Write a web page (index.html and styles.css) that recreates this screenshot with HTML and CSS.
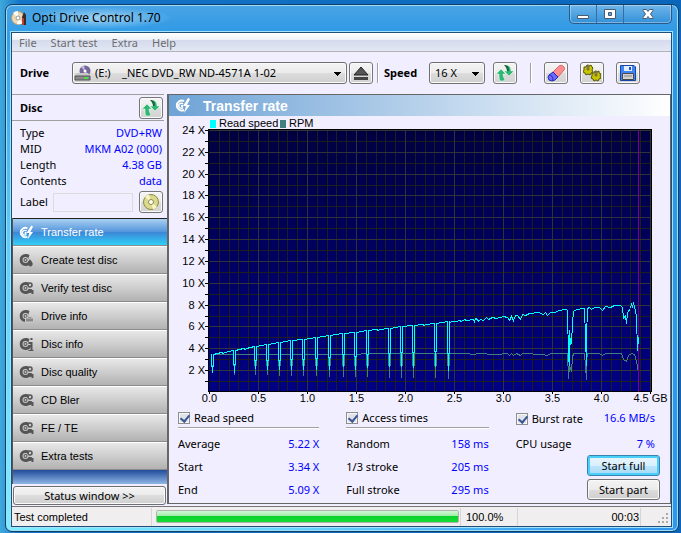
FILE: index.html
```html
<!doctype html>
<html lang="en">
    <head>
        <meta charset="utf-8"/>
        <title>Opti Drive Control 1.70</title>
        <link rel="stylesheet" href="styles.css">
    </head>
    <body>
        <svg class="defs" width="0" height="0" aria-hidden="true">
            <symbol id="refresh" viewBox="0 0 18 18">
                <path d="M5 5l5 5H7c0 2 1 4 2 6l-2 1H4c-1-2-1-4-1-7H0z" fill="#2eb872" stroke="#fff" stroke-width=".5"/>
                <path d="M9 1c4 0 6 2 6 6h3l-5 5-5-5h3c0-2-1-4-2-6z" fill="#2eb872" stroke="#fff" stroke-width=".5"/>
                <path d="M8 1c4 0 5 2 5 6h-2c0-2-1-4-3-6z" fill="#17653f"/>
            </symbol>
            <symbol id="disc" viewBox="0 0 14 14">
                <path fill="currentColor" fill-rule="evenodd" d="M6 1a6 6 0 1 0 0 12 6 6 0 0 0 6-5L9 8V5l1-3a6 6 0 0 0-4-1zM6 4a3 3 0 1 0 0 6 3 3 0 0 0 0-6z"/>
                <circle cx="6" cy="7" r="2" fill="currentColor"/>
                <circle cx="6" cy="7" r="1" fill="#ccc"/>
            </symbol>
            <symbol id="disc-bolt" viewBox="0 0 16 15">
                <path fill="none" stroke="#fff" stroke-width="2" d="M9 3a5 5 0 1 0 0 9"/>
                <path fill="none" stroke="#fff" stroke-width="1.500" d="M8 6a2.500 2.500 0 1 0 0 3.500"/>
                <path fill="#fff" d="M13 0L8 8h3l-2 7 6-8h-3l3-6zM6 7h2v2H6z"/>
            </symbol>
            <symbol id="disc-gears" viewBox="0 0 14 14">
                <use href="#disc"/>
                <circle cx="10.500" cy="4" r="2" fill="#ccc" stroke="#555" stroke-width="1.500"/>
                <circle cx="11" cy="10" r="2" fill="currentColor"/>
                <path d="M12 9h2v4h-2z" fill="currentColor"/>
            </symbol>
        </svg>

        <div class="window">
            <header class="titlebar">
                <svg class="app-icon" width="16" height="16" viewBox="0 0 16 16">
                    <circle cx="7" cy="8" r="6.500" fill="#ead9b4" stroke="#b59a6c"/>
                    <path d="M7 8L2 3a7 7 0 0 1 5-2zM7 8l5 5a7 7 0 0 1-6 1z" fill="#fff"/>
                    <circle cx="7" cy="8" r="2" fill="#fff" stroke="#999"/>
                    <path d="M11 7l2-5 2 3v10h-4z" fill="#3b2a28"/>
                    <path d="M11 8h2v7h-2z" fill="#b5432e"/>
                </svg>
                <h1>Opti Drive Control 1.70</h1>
                <div class="caption">
                    <button type="button" aria-label="Minimize">
                        <svg width="14" height="12" viewBox="0 0 14 12"><path d="M1.500 7.500h11v3h-11z" fill="#fff" stroke="#4b5a70"/></svg>
                    </button>
                    <button type="button" aria-label="Maximize">
                        <svg width="14" height="12" viewBox="0 0 14 12"><path fill-rule="evenodd" d="M1.500 1.500h11v9h-11zM5.500 4.500v3h3v-3z" fill="#fff" stroke="#4b5a70"/></svg>
                    </button>
                    <button type="button" class="close" aria-label="Close">
                        <svg width="14" height="12" viewBox="0 0 14 12"><path d="M2 1.500h3.500L7 3.500l1.500-2H12v1L9.500 6l2.500 3.500v1H8.500L7 8.500l-1.500 2H2v-1L4.500 6 2 2.500z" fill="#fff" stroke="#4b5a70"/></svg>
                    </button>
                </div>
            </header>

            <div class="client">
                <nav class="menu">
                    <a href="#">File</a>
                    <a href="#">Start test</a>
                    <a href="#">Extra</a>
                    <a href="#">Help</a>
                </nav>

                <div class="toolbar">
                    <label class="drive-label" for="drive">Drive</label>
                    <div class="drive-box">
                        <select id="drive"><option>(E:) &nbsp; &nbsp;_NEC DVD_RW ND-4571A 1-02</option></select>
                        <svg width="17" height="17" viewBox="0 0 17 17">
                            <circle cx="11" cy="6" r="5.500" fill="#75669c"/>
                            <path d="M11 6L7 2l3-1.500zM11 6l4 4-3 1z" fill="#c8bde0"/>
                            <circle cx="11" cy="6" r="1.500" fill="#fff"/>
                            <path d="M3 8h11l2 3H1z" fill="#c9c9c9"/>
                            <path d="M1 11h15v4H1z" fill="#8a8a8a" stroke="#555"/>
                            <path d="M10 12h4v2h-4z" fill="#4be04b"/>
                        </svg>
                    </div>
                    <button type="button" class="tool eject" aria-label="Eject">
                        <svg width="16" height="15" viewBox="0 0 16 15"><path d="M8 1l7 8H1z" fill="#555" stroke="#222"/><path d="M1 11h14v3H1z" fill="#444"/></svg>
                    </button>
                    <span class="divider"></span>
                    <label class="speed-label" for="speed">Speed</label>
                    <select id="speed"><option>16 X</option></select>
                    <button type="button" class="tool refresh" aria-label="Refresh speed"><svg width="18" height="18"><use href="#refresh"/></svg></button>
                    <span class="divider wide"></span>
                    <div class="tools">
                        <button type="button" class="tool" aria-label="Erase">
                            <svg width="18" height="18" viewBox="0 0 18 18">
                                <path d="M6 8l6-6q3-2 5 1 1 2 0 3l-6 7z" fill="#ff8f8f" stroke="#d86565"/>
                                <path d="M6 8l5 5-3 3q-3 2-6 0-2-3 0-5z" fill="#6a6aff" stroke="#2b2bb5"/>
                                <path d="M2 11q4 0 4 6" fill="none" stroke="#2b2bb5"/>
                            </svg>
                        </button>
                        <button type="button" class="tool" aria-label="Options">
                            <svg width="18" height="18" viewBox="0 0 18 18">
                                <g fill="#c9c400" stroke="#565200">
                                    <path d="M1 3h2l1-2 2 1 2-1 1 2 1 1-1 2 1 2-2 1-1 2-2-1-2 1-1-2-2-1 1-2z"/>
                                    <path d="M9 9h2l1-2 2 1 2-1 0 2 2 1-1 2 1 2-2 1-1 2-2-1-2 1-1-2-2-1 1-2z"/>
                                </g>
                                <path d="M4 1h2v5H4zM12 7h2v5h-2z" fill="#858585" stroke="#565200" stroke-width=".5"/>
                            </svg>
                        </button>
                        <button type="button" class="tool" aria-label="Save">
                            <svg width="16" height="16" viewBox="0 0 16 16">
                                <path d="M.5.500H14l1.500 1.500v13.500H.5z" fill="#3f86f5" stroke="#1746a8"/>
                                <path d="M4 1h8v5H4z" fill="#e4edfb"/><path d="M9 2h2v3H9z" fill="#2454c4"/>
                                <path d="M2.500 8.500h11v6h-11z" fill="#d0d0d0" stroke="#4b4b4b"/>
                                <path d="M4 11h8" stroke="#888"/>
                            </svg>
                        </button>
                    </div>
                </div>

                <div class="work">
                    <aside class="sidebar">
                        <div class="disc-head">
                            <h2>Disc</h2>
                            <button type="button" class="tool" aria-label="Refresh disc"><svg width="18" height="18"><use href="#refresh"/></svg></button>
                        </div>
                        <dl class="disc-info">
                            <div><dt>Type</dt><dd>DVD+RW</dd></div>
                            <div><dt>MID</dt><dd>MKM A02 (000)</dd></div>
                            <div><dt>Length</dt><dd>4.38 GB</dd></div>
                            <div><dt>Contents</dt><dd>data</dd></div>
                        </dl>
                        <div class="disc-label">
                            <label for="label">Label</label>
                            <input id="label" type="text">
                            <button type="button" class="tool" aria-label="Read label">
                                <svg width="18" height="18" viewBox="0 0 18 18">
                                    <circle cx="9" cy="9" r="7.500" fill="#dcd98c" stroke="#8d8a4a"/>
                                    <path d="M9 9L3 4a8 8 0 0 1 4-2.500zM9 9l6 5a8 8 0 0 1-4 2.500z" fill="#f8f6c8"/>
                                    <circle cx="9" cy="9" r="2.500" fill="#fff" stroke="#8d8a4a"/>
                                </svg>
                            </button>
                        </div>
                        <ul class="tests">
                            <li><a class="active" href="#"><svg width="15" height="15"><use href="#disc-bolt"/></svg>Transfer rate</a></li>
                            <li><a href="#"><svg width="14" height="14" viewBox="0 0 14 14"><use href="#disc"/><path d="M10 6q4 4 3 6-2 3-4 0 0-3 1-6z" fill="#555"/></svg>Create test disc</a></li>
                            <li><a href="#"><svg width="14" height="14"><use href="#disc-gears"/></svg>Verify test disc</a></li>
                            <li><a href="#"><svg width="14" height="14" viewBox="0 0 14 14"><use href="#disc"/><path d="M6 9h8v4H6z" fill="#888" stroke="#ccc"/></svg>Drive info</a></li>
                            <li><a href="#"><svg width="14" height="14" viewBox="0 0 14 14"><use href="#disc"/><path d="M11 1h2v2h-2zM9 5h4v8h1v1H9v-1h2V7H9z" fill="#555"/></svg>Disc info</a></li>
                            <li><a href="#"><svg width="14" height="14"><use href="#disc-gears"/></svg>Disc quality</a></li>
                            <li><a href="#"><svg width="14" height="14"><use href="#disc-gears"/></svg>CD Bler</a></li>
                            <li><a href="#"><svg width="14" height="14"><use href="#disc-gears"/></svg>FE / TE</a></li>
                            <li><a href="#"><svg width="14" height="14"><use href="#disc-gears"/></svg>Extra tests</a></li>
                        </ul>
                        <button type="button" class="btn status-btn">Status window &gt;&gt;</button>
                    </aside>

                    <main class="panel">
                        <div class="panel-head">
                            <svg width="16" height="15"><use href="#disc-bolt"/></svg>
                            <h2>Transfer rate</h2>
                        </div>
                        <svg class="chart" id="chart" viewBox="0 0 501 290" role="img" aria-label="Read speed and RPM">
                            <defs>
                                <linearGradient id="plot" x1="0" y1="0" x2="0" y2="1">
                                    <stop offset="0" stop-color="#000040"/>
                                    <stop offset="1" stop-color="#000084"/>
                                </linearGradient>
                            </defs>
                            <rect x="41" y="4" width="6" height="8" fill="#0ff"/>
                            <text x="50" y="11">Read speed</text>
                            <rect x="111" y="4" width="6" height="8" fill="#408080"/>
                            <text x="120" y="11">RPM</text>
                            <rect x="39" y="13" width="444" height="263" fill="url(#plot)"/>
                        </svg>
                        <div class="results">
                            <section>
                                <label class="check"><input type="checkbox" checked>Read speed</label>
                                <dl>
                                    <div><dt>Average</dt><dd>5.22 X</dd></div>
                                    <div><dt>Start</dt><dd>3.34 X</dd></div>
                                    <div><dt>End</dt><dd>5.09 X</dd></div>
                                </dl>
                            </section>
                            <section>
                                <label class="check"><input type="checkbox" checked>Access times</label>
                                <dl>
                                    <div><dt>Random</dt><dd>158 ms</dd></div>
                                    <div><dt>1/3 stroke</dt><dd>205 ms</dd></div>
                                    <div><dt>Full stroke</dt><dd>295 ms</dd></div>
                                </dl>
                            </section>
                            <section class="burst">
                                <div class="burst-row">
                                    <label class="check"><input type="checkbox" checked>Burst rate</label>
                                    <output>16.6 MB/s</output>
                                </div>
                                <dl>
                                    <div><dt>CPU usage</dt><dd>7 %</dd></div>
                                </dl>
                                <div class="actions">
                                    <button type="button" class="btn primary">Start full</button>
                                    <button type="button" class="btn">Start part</button>
                                </div>
                            </section>
                        </div>
                    </main>
                </div>

                <footer class="statusbar">
                    <span class="message" id="message">Test completed</span>
                    <progress max="100" value="100" aria-labelledby="message"></progress>
                    <span class="percent">100.0%</span>
                    <span class="time">00:03</span>
                    <svg width="12" height="12" viewBox="0 0 12 12" fill="#aaa">
                        <path d="M8 0h2v2H8zM8 4h2v2H8zM4 4h2v2H4zM8 8h2v2H8zM4 8h2v2H4zM0 8h2v2H0z"/>
                    </svg>
                </footer>
            </div>
        </div>
        <script src="chart.js"></script>
    </body>
</html>
```
FILE: styles.css
```css
* {
    margin: 0;
    padding: 0;
    box-sizing: border-box;
}
body {
    min-height: 100vh;
    padding: 4px 2px 1px 5px;
    background: linear-gradient(90deg, #3fa9dc, #1575c8 20px, #0a66bb);
    font: 11px/16px "Noto Sans", "Open Sans", sans-serif;
    color: #000;
}
h1, h2 {
    font-size: 11px;
}
ul {
    list-style: none;
}
a {
    color: inherit;
    text-decoration: none;
}
button, input, select {
    font: inherit;
    color: inherit;
}
.defs {
    position: absolute;
}
.window {
    padding: 0 6px 4px 5px;
    border: 1px solid #123f66;
    border-radius: 7px;
    background:
        radial-gradient(ellipse 90% 100% at 0 100%, #7cf0ff, rgba(110, 225, 255, .8) 50%, rgba(60, 170, 240, 0)),
        linear-gradient(#4aa4e4, #2c98e6 30px, #2f97ee);
    box-shadow: inset 0 0 0 1px #9fdcf8;
}

/* title bar */
.titlebar {
    display: flex;
    height: 27px;
}
.app-icon {
    margin-top: 5px;
}
.titlebar h1 {
    margin: 2px 0 3px;
    padding: 0 12px 0 5px;
    font-size: 12px;
    font-weight: normal;
    line-height: 22px;
    background: radial-gradient(closest-side, rgba(200, 232, 250, .7), rgba(200, 232, 250, 0));
}
.caption {
    display: flex;
    height: 19px;
    margin-left: auto;
    border: 1px solid #255b8f;
    border-top: 0;
    border-radius: 0 0 5px 5px;
    box-shadow: inset 0 0 0 1px #8fc4ec;
}
.caption button {
    display: flex;
    justify-content: center;
    align-items: center;
    width: 27px;
    border: 0;
    border-right: 1px solid #3b6c9f;
    background: linear-gradient(rgba(255, 255, 255, .2), rgba(20, 80, 150, .15));
}
.caption .close {
    width: 47px;
    border-right: 0;
}

.client {
    border: 1px solid #1d4f78;
    background: #f0eeff;
    box-shadow: 0 0 0 1px #a5e2fa;
}

/* menu and toolbar */
.menu {
    display: flex;
    gap: 14px;
    height: 19px;
    padding: 0 7px;
    border-bottom: 1px solid #b4b4b4;
    background: linear-gradient(#fff, #eef0f8 7px, #d5dbed 7px, #e3e7f5);
    color: #6d6d6d;
    line-height: 19px;
}
.toolbar {
    display: flex;
    align-items: center;
    height: 42px;
    padding: 0 8px;
}
.toolbar label {
    font-weight: bold;
}
.toolbar select {
    height: 22px;
    padding: 0 5px;
    appearance: none;
    border: 1px solid #707070;
    border-radius: 3px;
    background:
        linear-gradient(#000, #000) right 5px top 9px / 7px 1px no-repeat,
        linear-gradient(#000, #000) right 6px top 10px / 5px 1px no-repeat,
        linear-gradient(#000, #000) right 7px top 11px / 3px 1px no-repeat,
        linear-gradient(#000, #000) right 8px top 12px / 1px 1px no-repeat,
        linear-gradient(#f3f3f3, #ebebeb 50%, #dddddd 50%, #cfcfcf);
    box-shadow: inset 0 0 0 1px #fafafa;
}
.drive-label {
    width: 52px;
}
.drive-box {
    position: relative;
    flex: 1;
}
.drive-box select {
    width: 100%;
    padding-left: 22px;
}
.drive-box svg {
    position: absolute;
    top: 3px;
    left: 2px;
}
#speed {
    width: 56px;
}
.tool {
    display: flex;
    flex: none;
    justify-content: center;
    align-items: center;
    width: 24px;
    height: 22px;
    border: 1px solid #777;
    border-radius: 3px;
    background: linear-gradient(#f5f5f5, #ebebeb 50%, #dddddd 50%, #d2d2d2);
    box-shadow: inset 0 0 0 1px #fafafa;
}
.eject {
    margin-left: 2px;
}
.divider {
    width: 2px;
    height: 20px;
    margin: 0 5px 0 4px;
    border-left: 1px solid #a0a0a0;
    border-right: 1px solid #fff;
}
.divider.wide {
    margin: 0 12px 0 13px;
}
.speed-label {
    width: 45px;
}
.refresh {
    margin-left: 8px;
}
.tools {
    display: flex;
    gap: 12px;
    margin-right: 23px;
}

/* left column */
.work {
    display: flex;
}
.sidebar {
    display: flex;
    flex-direction: column;
    width: 155px;
}
.disc-head {
    display: flex;
    justify-content: space-between;
    align-items: center;
    height: 27px;
    margin-right: 3px;
    padding: 0 1px 0 8px;
    border-top: 1px solid #a0a0a0;
    border-bottom: 1px solid #a0a0a0;
}
.disc-info {
    padding: 4px 5px 0 8px;
}
.disc-info div {
    display: flex;
    justify-content: space-between;
}
dd, output {
    color: #00f;
}
.disc-label {
    display: flex;
    align-items: center;
    height: 29px;
    padding: 0 4px 3px 8px;
}
.disc-label label {
    width: 33px;
}
.disc-label input {
    flex: 1;
    min-width: 0;
    height: 19px;
    margin-right: 6px;
    border: 1px solid #dcdcdc;
    background: #f0eeff;
}
.tests {
    padding-bottom: 14px;
    border-left: 1px solid #555;
    background: linear-gradient(#1f4c9c, #8fb6e4) 0 100% / 100% 14px no-repeat;
    font-family: "Liberation Sans", Arial, sans-serif;
}
.tests a {
    display: flex;
    align-items: center;
    gap: 7px;
    height: 28px;
    padding-left: 6px;
    border-top: 1px solid #fff;
    border-bottom: 1px solid #8c8c8c;
    background: linear-gradient(#e8e8e8, #b2b2b2);
}
.tests svg {
    flex: none;
    width: 15px;
    color: #555;
}
.tests .active {
    border-top-color: #222;
    background: linear-gradient(#a9d0f2, #5294dc 50%, #3d85d6 50%, #2fd0f8);
    color: #fff;
}
.btn {
    height: 21px;
    border: 1px solid #707070;
    border-radius: 3px;
    background: linear-gradient(#f3f3f3, #ebebeb 50%, #dddddd 50%, #cfcfcf);
    box-shadow: inset 0 0 0 1px #fafafa;
    line-height: 18px;
}
.status-btn {
    height: 19px;
    margin: 2px 1px 1px;
    line-height: 16px;
}

/* right column */
.panel {
    flex: 1;
    min-width: 0;
    margin-bottom: 2px;
    border: 1px solid #666;
    border-left-width: 2px;
}
.panel-head {
    display: flex;
    align-items: center;
    gap: 12px;
    height: 21px;
    padding-left: 6px;
    background: linear-gradient(90deg, #6ea3d6, #fff);
}
.panel-head h2 {
    color: #fff;
    font: bold 14px "Liberation Sans", Arial, sans-serif;
}
.chart {
    display: block;
    width: 100%;
    shape-rendering: crispEdges;
    font: 11px "Liberation Sans", Arial, sans-serif;
}
.results {
    display: grid;
    grid-template-columns: 141fr 142fr 144fr;
    column-gap: 27px;
    padding: 3px 10px 0 9px;
}
.check {
    display: flex;
    align-items: center;
    gap: 4px;
    height: 19px;
}
.check input {
    width: 12px;
    height: 12px;
    appearance: none;
    border: 1px solid #8e8f8f;
    background: #dfe3ea;
    box-shadow: inset 0 0 0 1px #f6f6f6;
}
.check input:checked::before {
    content: "";
    display: block;
    width: 4px;
    height: 7px;
    margin-left: 3px;
    border: solid #3c5694;
    border-width: 0 2px 2px 0;
    transform: rotate(40deg);
}
.results section > .check {
    border-bottom: 1px solid #a0a0a0;
    box-shadow: 0 1px #fff;
}
.results dl {
    padding-top: 4px;
}
.results dl div, .burst-row {
    display: flex;
    justify-content: space-between;
    line-height: 23px;
}
.burst-row {
    height: 19px;
    padding-right: 5px;
    line-height: 18px;
}
.burst dl {
    padding-right: 5px;
}
.actions {
    display: grid;
    row-gap: 3px;
    justify-content: end;
}
.actions .btn {
    width: 73px;
}
.actions .primary {
    border-color: #3c7fb1;
    background: linear-gradient(#eaf6fd, #d9f0fc 50%, #bee6fd 50%, #a7d9f5);
    box-shadow: inset 0 0 0 2px #48d0f8;
}

/* status bar */
.statusbar {
    display: flex;
    align-items: center;
    height: 20px;
    border-top: 1px solid #777;
    background: #f0eeee;
    font-family: "Liberation Sans", Arial, sans-serif;
    line-height: 18px;
}
.statusbar span {
    border-right: 1px solid #d5d5d5;
}
.message {
    width: 140px;
    padding-left: 2px;
}
progress {
    flex: 1;
    height: 13px;
    margin-left: 4px;
    appearance: none;
    border: 1px solid #b0b0b0;
    border-radius: 2px;
}
progress::-webkit-progress-bar {
    background: #e6e6e6;
}
progress::-webkit-progress-value {
    background: linear-gradient(#d0f8d4, #a0eca8 45%, #0cd02c 45%, #14dc34);
}
.percent {
    width: 58px;
    margin-left: 1px;
    padding-left: 5px;
    border-left: 1px solid #d5d5d5;
}
.time {
    width: 123px;
    padding-right: 1px;
    text-align: right;
}
.statusbar svg {
    margin: 4px 1px 0 17px;
}
```
FILE: chart.js
```javascript
(function(){
    const NS = 'http://www.w3.org/2000/svg';
    const chart = document.getElementById('chart');
    const LEFT = 40, RIGHT = 481, TOP = 14, BOTTOM = 276;

    function add(name, attrs, text){
        const el = document.createElementNS(NS, name);
        Object.keys(attrs).forEach(key => el.setAttribute(key, attrs[key]));
        if(text){
            el.textContent = text;
        }
        chart.appendChild(el);
    }
    function line(x1, y1, x2, y2, stroke){
        add('path', { d: `M${x1} ${y1}L${x2} ${y2}`, stroke: stroke });
    }
    const gx = i => Math.round(LEFT + i * 9.8) + 0.5;
    const gy = i => Math.round(BOTTOM - i * 10.92) + 0.5;

    // minor lines first, so the major ones stay on top
    [false, true].forEach(major => {
        const stroke = major ? '#303438' : '#1d1e20';
        for(let i = 1; i <= 45; i++){
            if((i % 5 === 0) === major){
                line(gx(i), TOP, gx(i), BOTTOM, stroke);
            }
        }
        for(let i = 1; i <= 24; i++){
            if((i % 2 === 0) === major){
                line(LEFT, gy(i), RIGHT, gy(i), stroke);
            }
        }
    });
    add('rect', { x: 39.5, y: 13.5, width: 443, height: 262, fill: 'none', stroke: '#000' });

    // scale marks and labels
    for(let i = 1; i <= 24; i++){
        line(36, gy(i), 39, gy(i), '#000');
        if(i % 2 === 0){
            add('text', { x: 36, y: gy(i) + 3.5, 'text-anchor': 'end' }, i + ' X');
        }
    }
    for(let i = 0; i <= 45; i += 5){
        line(gx(i), BOTTOM, gx(i), BOTTOM + 2, '#000');
        add('text', { x: gx(i), y: 286, 'text-anchor': 'middle' }, (i / 10).toFixed(1) + (i === 45 ? ' GB' : ''));
    }

    // x, curve height, lowest point of the drop
    const drops = [
        [43, 238, 256], [65, 234, 256], [86, 230, 252], [98, 228, 253],
        [110, 226, 253], [122, 224, 253], [134, 223, 253], [147, 221, 253],
        [160, 219, 253], [174, 217, 250], [186, 216, 253], [198, 214, 251],
        [220, 212, 250], [232, 210, 250], [244, 209, 251], [266, 207, 250],
        [279, 205, 254]
    ];
    const speed = [[41, 238]];
    const rpm = [[41, 238]];
    drops.forEach(([x, y, low], i) => {
        const mid = Math.round(y + (low - y) * 0.65);
        speed.push([x - 1, y], [x - 1, mid], [x, mid], [x, low], [x, mid], [x + 1, mid], [x + 1, y]);
        const level = x < 188 ? 238 : 237;
        const next = drops[i + 1];
        if(next && next[0] - x > 15){
            const half = Math.round((x + next[0]) / 2);
            speed.push([half - 2, Math.round((y + next[1]) / 2)], [half, Math.round((y + next[1]) / 2) + 1], [half + 1, Math.round((y + next[1]) / 2)]);
        }
        const foot = x === 43 ? 250 : Math.min(262, 258 + Math.floor(i / 4));
        rpm.push([x - 1, level], [x - 1, 249], [x, 249], [x, foot], [x, 249], [x + 1, 249], [x + 1, level]);
    });
    speed.push(
        [281, 206], [282, 205], [287, 205], [290, 204], [292, 205], [295, 203], [297, 204], [304, 203],
        [305, 205], [306, 202], [308, 203], [309, 205], [311, 203], [314, 204], [317, 201], [319, 203],
        [323, 201], [327, 202], [334, 200], [338, 201], [340, 204], [342, 200], [344, 204], [346, 199],
        [348, 199], [351, 203], [353, 198], [356, 199], [360, 197], [369, 196], [374, 198], [376, 196],
        [378, 199], [381, 196], [386, 196], [389, 194], [397, 193], [398, 194], [399, 241], [400, 249],
        [400, 214], [401, 228], [402, 217], [402, 227], [403, 206], [404, 195], [407, 193], [415, 192],
        [416, 221], [417, 249], [417, 221], [418, 192], [420, 191], [422, 193], [425, 191], [430, 191],
        [433, 194], [436, 190], [441, 191], [445, 189], [451, 189], [453, 191], [454, 202], [456, 199],
        [457, 207], [458, 196], [461, 192], [462, 188], [463, 190], [464, 187], [466, 194], [467, 201],
        [468, 234], [469, 221], [469, 227]
    );
    rpm.push(
        [295, 237], [305, 238], [308, 237], [327, 238], [338, 237], [340, 239], [342, 237], [344, 239],
        [347, 237], [351, 239], [353, 237], [373, 238], [378, 239], [381, 237], [398, 237], [399, 262],
        [400, 250], [402, 254], [403, 241], [404, 237], [415, 237], [416, 250], [417, 263], [417, 245],
        [418, 237], [430, 237], [433, 239], [436, 237], [452, 237], [454, 243], [457, 245], [459, 239],
        [462, 237], [465, 238], [468, 249], [469, 257], [469, 252]
    );
    const points = list => list.map(([x, y]) => `${x + 0.5},${y + 0.5}`).join(' ');
    add('polyline', { points: points(rpm), fill: 'none', stroke: '#408080' });
    line(469.5, TOP, 469.5, BOTTOM, '#800080');
    add('polyline', { points: points(speed), fill: 'none', stroke: '#0ff' });
})();
```
